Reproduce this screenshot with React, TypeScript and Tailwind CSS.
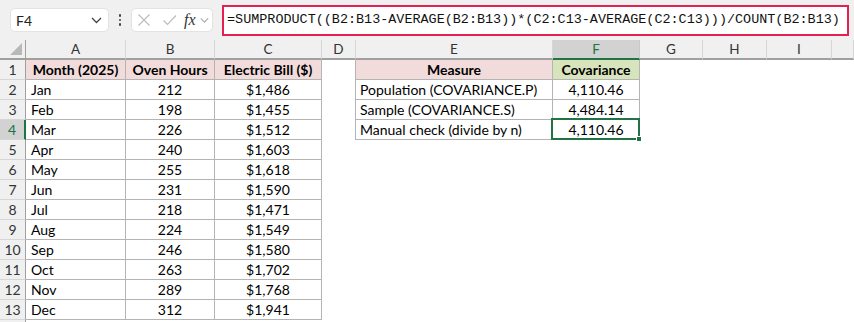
import React from "react";

const rows: [string, string, string][] = [
  ["Jan", "212", "$1,486"],
  ["Feb", "198", "$1,455"],
  ["Mar", "226", "$1,512"],
  ["Apr", "240", "$1,603"],
  ["May", "255", "$1,618"],
  ["Jun", "231", "$1,590"],
  ["Jul", "218", "$1,471"],
  ["Aug", "224", "$1,549"],
  ["Sep", "246", "$1,580"],
  ["Oct", "263", "$1,702"],
  ["Nov", "289", "$1,768"],
  ["Dec", "312", "$1,941"],
];

const side: [string, string][] = [
  ["Measure", "Covariance"],
  ["Population (COVARIANCE.P)", "4,110.46"],
  ["Sample (COVARIANCE.S)", "4,484.14"],
  ["Manual check (divide by n)", "4,110.46"],
];

const cols = ["A", "B", "C", "D", "E", "F", "G", "H", "I", ""];

function Chevron({ className }: { className?: string }) {
  return (
    <svg width="11" height="7" viewBox="0 0 11 7" className={className}>
      <path d="M1 1 L5.5 5.5 L10 1" fill="none" stroke="currentColor" strokeWidth="1.3" />
    </svg>
  );
}

export default function App() {
  const cellFont = { fontFamily: "Lato, 'Liberation Sans', sans-serif" };
  return (
    <div className="w-[854px] h-[322px] overflow-hidden bg-white" style={cellFont}>
      {/* formula bar */}
      <div className="h-[40px] bg-[#f0f0f0] flex items-center">
        <div className="ml-[10px] w-[99px] h-[24px] bg-white rounded-[5px] border border-[#e3e3e3] flex items-center justify-between pl-[5px] pr-[6px] text-[14px] text-[#222]">
          <span>F4</span>
          <Chevron className="text-[#444]" />
        </div>
        <div className="w-[22px] flex flex-col items-center gap-[2px]">
          <span className="w-[2.5px] h-[2.5px] bg-[#444] rounded-full" />
          <span className="w-[2.5px] h-[2.5px] bg-[#444] rounded-full" />
          <span className="w-[2.5px] h-[2.5px] bg-[#444] rounded-full" />
        </div>
        <div className="w-[82px] h-[24px] bg-white rounded-[5px] border border-[#e3e3e3] flex items-center pl-[5px]">
          <svg width="14" height="14" viewBox="0 0 14 14">
            <path d="M1.5 1.5 L12.5 12.5 M12.5 1.5 L1.5 12.5" stroke="#bdbdbd" strokeWidth="1.2" fill="none" />
          </svg>
          <svg width="16" height="14" viewBox="0 0 16 14" className="ml-[11px]">
            <path d="M1.5 7.5 L5.5 11.5 L14 2.5" stroke="#bdbdbd" strokeWidth="1.2" fill="none" />
          </svg>
          <span
            className="ml-[6px] text-[16px] italic text-[#333] leading-none"
            style={{ fontFamily: "'Liberation Serif', serif" }}
          >
            fx
          </span>
          <Chevron className="ml-[4px] text-[#aaa] w-[9px]" />
        </div>
        <div className="ml-[9px] w-[627px] h-[31px] bg-white border-[2.5px] border-[#e3204f] flex items-center pl-[3px]">
          <span
            className="text-[13.45px] text-[#111] whitespace-nowrap"
            style={{ fontFamily: "'Liberation Mono', monospace" }}
          >
            =SUMPRODUCT((B2:B13-AVERAGE(B2:B13))*(C2:C13-AVERAGE(C2:C13)))/COUNT(B2:B13)
          </span>
        </div>
      </div>

      {/* grid */}
      <div className="grid grid-cols-[26px_100px_89px_107px_34px_197px_87px_63px_64px_65px_22px] auto-rows-[20px] text-[14px] text-black">
        {/* header row */}
        <div className="bg-[#f0f0f0] border-r border-b-2 border-[#a0a0a0] relative">
          <svg width="12" height="12" viewBox="0 0 12 12" className="absolute right-[3px] bottom-[3px]">
            <path d="M12 0 L12 12 L0 12 Z" fill="#b8b8b8" />
          </svg>
        </div>
        {cols.map((c, i) =>
          c === "F" ? (
            <div
              key={i}
              className="bg-[#d2d2d2] border-r border-[#c8c8c8] border-b-2 border-b-[#217346] flex items-center justify-center text-[#217346] text-[13.5px]"
            >
              {c}
            </div>
          ) : (
            <div
              key={i}
              className="bg-[#f0f0f0] border-r border-[#d6d6d6] border-b-2 border-b-[#a0a0a0] flex items-center justify-center text-[#333] text-[13.5px]"
            >
              {c}
            </div>
          )
        )}

        {Array.from({ length: 14 }).map((_, r) => {
          const rn = r + 1;
          const sel = rn === 4;
          const cells: React.ReactNode[] = [];
          cells.push(
            <div
              key="h"
              className={
                sel
                  ? "bg-[#d2d2d2] border-r-2 border-r-[#217346] border-b border-b-[#d6d6d6] flex items-center justify-center text-[#217346] text-[14px]"
                  : "bg-[#f0f0f0] border-r border-r-[#a0a0a0] border-b border-b-[#d6d6d6] flex items-center justify-center text-[#333] text-[14px]"
              }
            >
              {rn <= 13 ? rn : ""}
            </div>
          );
          // A-C
          if (rn === 1) {
            ["Month (2025)", "Oven Hours", "Electric Bill ($)"].forEach((t, i) =>
              cells.push(
                <div
                  key={"t" + i}
                  className="bg-[#f2dcdb] border-r border-b border-[#b4b4b4] flex items-center justify-center font-bold whitespace-nowrap"
                >
                  {t}
                </div>
              )
            );
          } else if (rn <= 13) {
            const d = rows[rn - 2];
            cells.push(
              <div key="a" className="border-r border-b border-[#b4b4b4] flex items-center pl-[5px]">
                {d[0]}
              </div>,
              <div key="b" className="border-r border-b border-[#b4b4b4] flex items-center justify-center">
                {d[1]}
              </div>,
              <div key="c" className="border-r border-b border-[#b4b4b4] flex items-center justify-center">
                {d[2]}
              </div>
            );
          } else {
            cells.push(<div key="a" />, <div key="b" />, <div key="c" />);
          }
          // D
          cells.push(<div key="d" className={rn <= 4 ? "border-r border-[#b4b4b4]" : ""} />);
          // E-F
          if (rn <= 4) {
            const s = side[rn - 1];
            cells.push(
              <div
                key="e"
                className={
                  rn === 1
                    ? "bg-[#f2dcdb] border-r border-b border-[#b4b4b4] flex items-center justify-center font-bold"
                    : "border-r border-b border-[#b4b4b4] flex items-center pl-[4px] whitespace-nowrap"
                }
              >
                {s[0]}
              </div>,
              <div
                key="f"
                className={
                  rn === 1
                    ? "bg-[#d8e4bc] border-r border-b border-[#b4b4b4] flex items-center justify-center font-bold"
                    : "border-r border-b border-[#b4b4b4] flex items-center justify-center relative"
                }
              >
                {s[1]}
                {rn === 4 && (
                  <>
                    <div className="absolute -left-[2px] -top-[2px] -right-[1px] -bottom-[1px] border-2 border-[#217346] pointer-events-none" />
                    <div className="absolute -right-[3px] -bottom-[3px] w-[6px] h-[6px] bg-[#217346] border border-white" />
                  </>
                )}
              </div>
            );
          } else {
            cells.push(<div key="e" />, <div key="f" />);
          }
          cells.push(<div key="g" />, <div key="h2" />, <div key="i" />, <div key="j" />);
          return <React.Fragment key={r}>{cells}</React.Fragment>;
        })}
      </div>
    </div>
  );
}
